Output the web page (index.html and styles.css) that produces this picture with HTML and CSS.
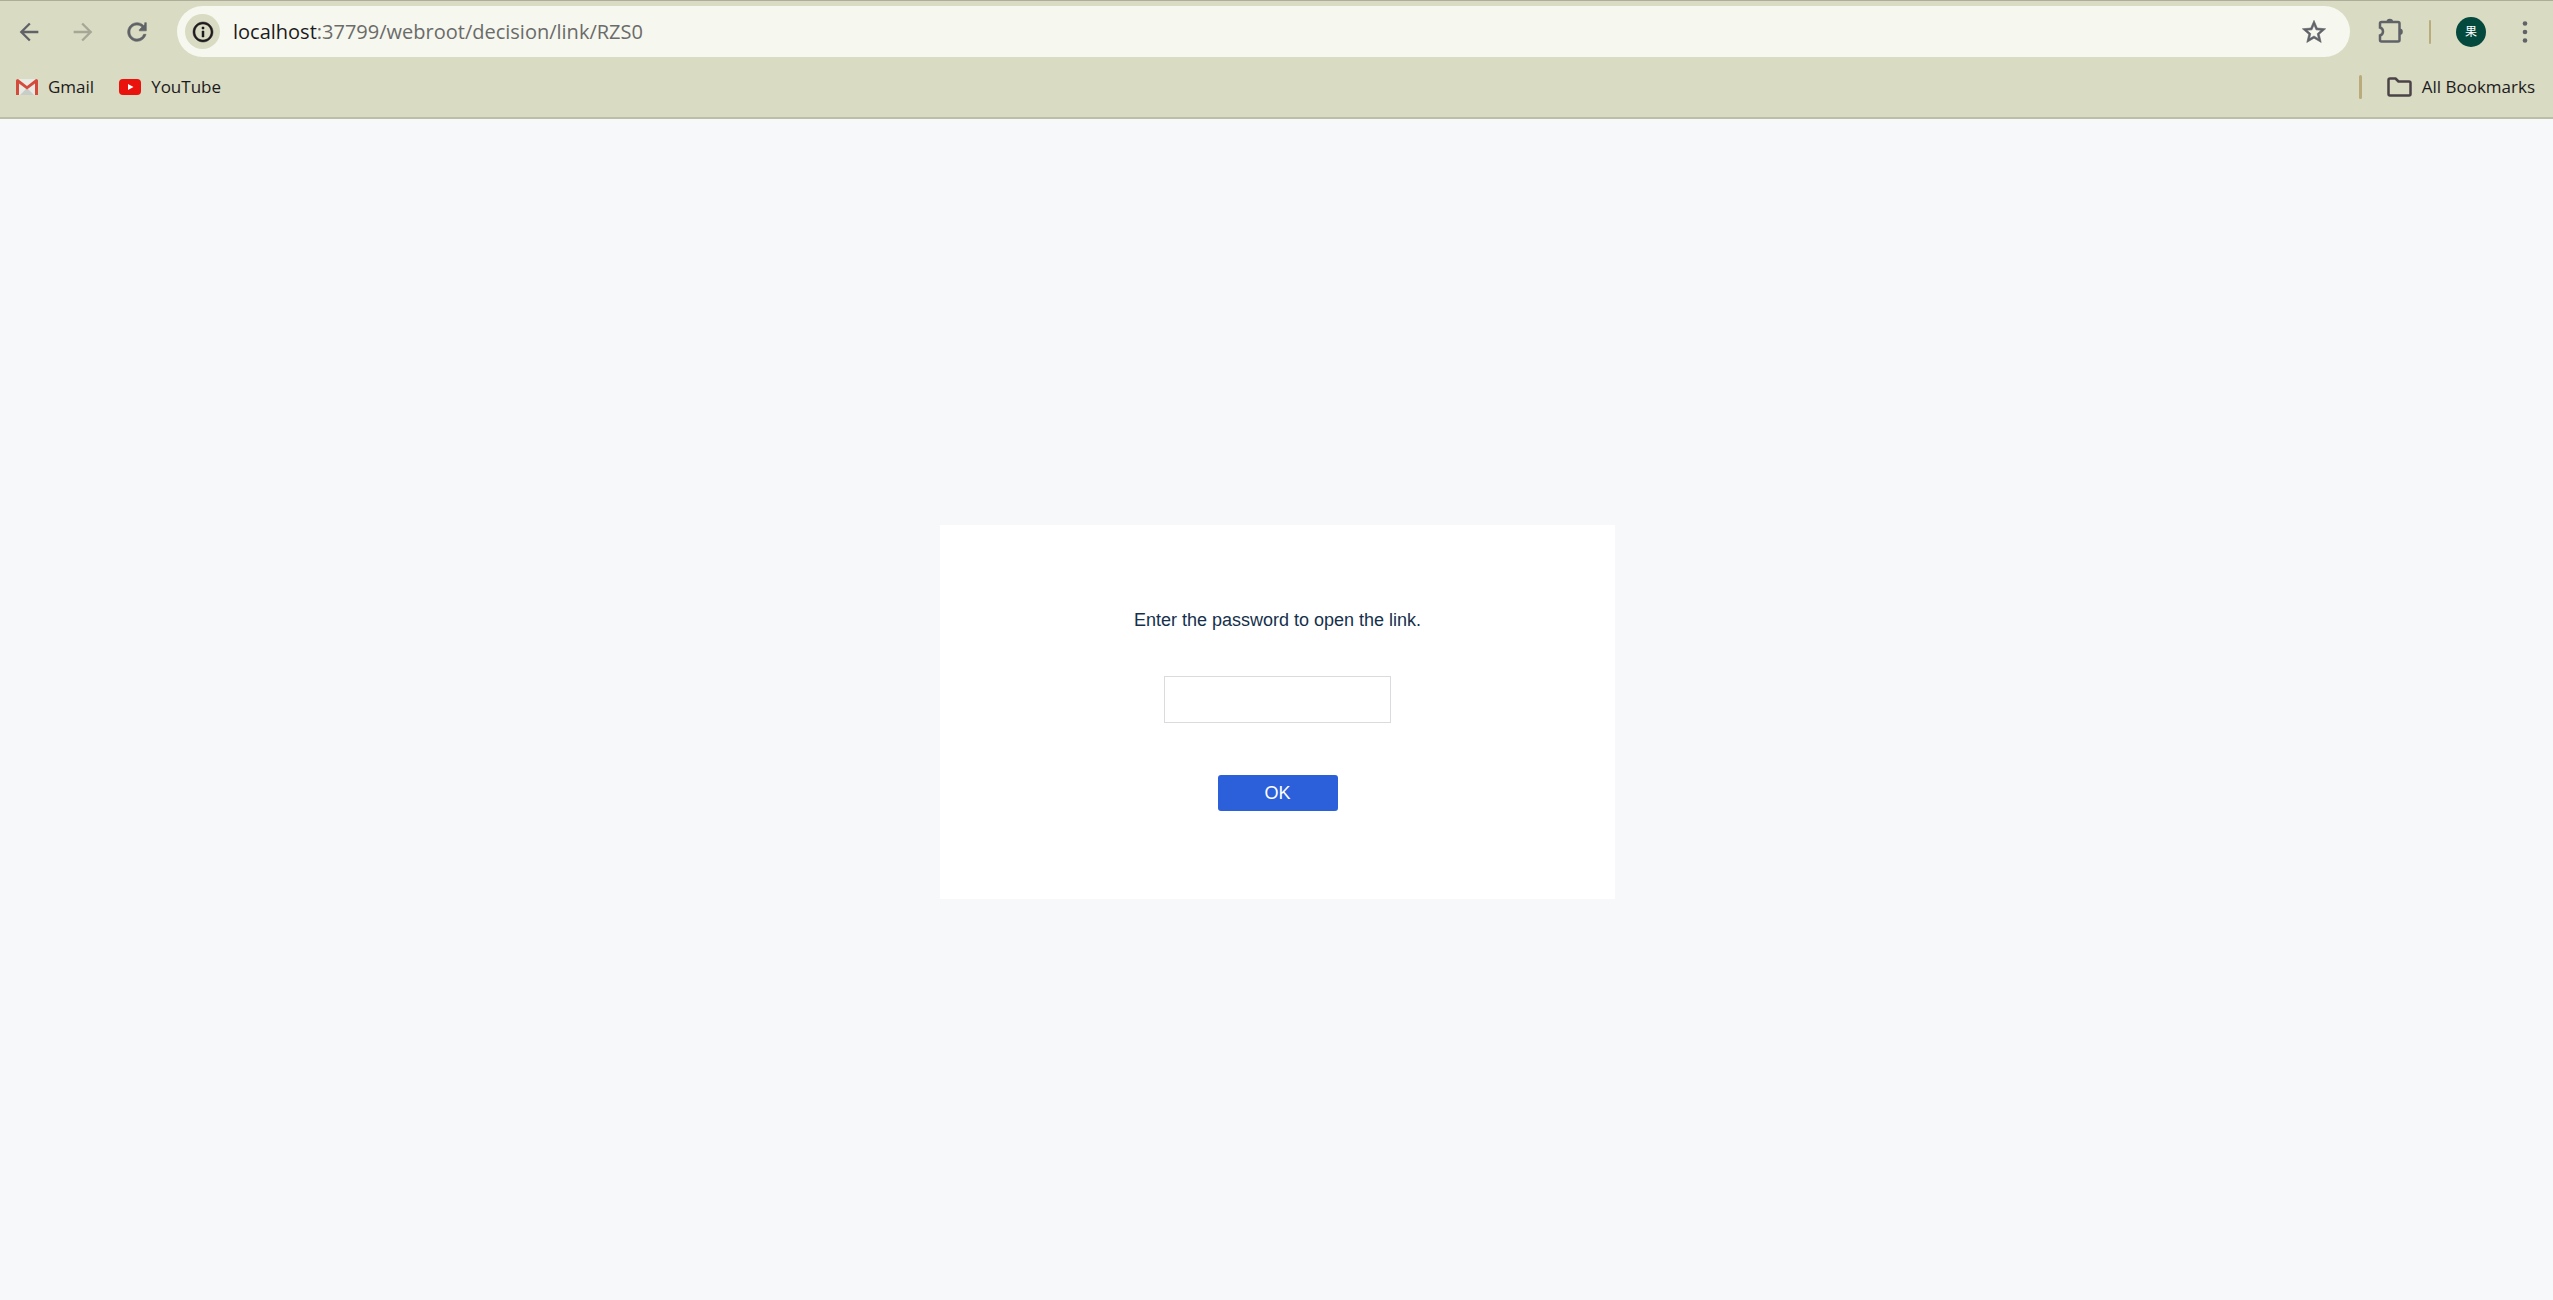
FILE: index.html
```
<!DOCTYPE html>
<html lang="en">
<head>
  <meta charset="utf-8">
  <title>Password</title>
  <link rel="stylesheet" href="styles.css">
</head>
<body>
  <header class="browser">
    <div class="toolbar">
      <button class="tool" type="button" aria-label="Back">
        <svg width="28" height="28" viewBox="0 0 24 24"><path d="M20 11H7.83l5.59-5.59L12 4l-8 8 8 8 1.41-1.41L7.83 13H20v-2z"/></svg>
      </button>
      <button class="tool disabled" type="button" aria-label="Forward">
        <svg width="28" height="28" viewBox="0 0 24 24"><path d="M4 11h12.17l-5.59-5.59L12 4l8 8-8 8-1.41-1.41L16.17 13H4v-2z"/></svg>
      </button>
      <button class="tool bold" type="button" aria-label="Reload">
        <svg width="28" height="28" viewBox="0 0 24 24"><path d="M17.65 6.35C16.2 4.9 14.21 4 12 4c-4.42 0-7.99 3.58-7.99 8s3.57 8 7.99 8c3.73 0 6.84-2.55 7.73-6h-2.08c-.82 2.33-3.04 4-5.65 4-3.31 0-6-2.69-6-6s2.69-6 6-6c1.66 0 3.14.69 4.22 1.78L14 10v1h6V4h-1.4v1.4z"/></svg>
      </button>
      <div class="omnibox">
        <button class="site-info" type="button" aria-label="Site information">
          <svg width="24" height="24" viewBox="0 0 24 24"><path d="M11 7h2v2h-2zM11 11h2v6h-2zM12 2C6.48 2 2 6.48 2 12s4.48 10 10 10 10-4.48 10-10S17.52 2 12 2zm0 18c-4.41 0-8-3.59-8-8s3.59-8 8-8 8 3.59 8 8-3.59 8-8 8z"/></svg>
        </button>
        <div class="url"><span class="host">localhost</span>:37799/webroot/decision/link/RZS0</div>
        <button class="tool bold" type="button" aria-label="Bookmark this tab">
          <svg width="28" height="28" viewBox="0 0 24 24"><path d="M22 9.24l-7.19-.62L12 2 9.19 8.63 2 9.24l5.46 4.73L5.82 21 12 17.27 18.18 21l-1.63-7.03L22 9.24zM12 15.4l-3.76 2.27 1-4.28-3.32-2.88 4.38-.38L12 6.1l1.71 4.04 4.38.38-3.32 2.88 1 4.28L12 15.4z"/></svg>
        </button>
      </div>
      <div class="tools">
        <button class="tool" type="button" aria-label="Extensions">
          <svg width="28" height="28" viewBox="0 0 28 28"><path class="line" d="M4 5.500q0-1.500 1.500-1.500h16.500q1.500 0 1.500 1.500v16.500q0 1.500-1.500 1.500h-16.500q-1.500 0-1.500-1.500v-4.500q3-1 3-4t-3-4z"/><path d="M10.500 4a3.300 3.300 0 0 1 6.600 0zM23.500 10.500a3.300 3.300 0 0 1 0 6.600z"/></svg>
        </button>
        <span class="divider thin"></span>
        <button class="avatar" type="button">果</button>
        <button class="tool" type="button" aria-label="Menu">
          <svg width="28" height="28" viewBox="0 0 28 28"><circle cx="14" cy="5.500" r="2.300"/><circle cx="14" cy="14" r="2.300"/><circle cx="14" cy="22.500" r="2.300"/></svg>
        </button>
      </div>
    </div>
    <nav class="bookmarks">
      <a class="bookmark" href="#">
        <svg width="22" height="16" viewBox="0 0 22 16"><path fill="#e8eae4" d="M2 0h18v16H2z"/><path fill="#c9cdc8" d="M4 16l7-7 7 7z"/><path fill="#d54b3b" d="M0 1.500Q0 0 2 0l9 7 9-7q2 0 2 1.500V16h-3V4.500l-8 6-8-6V16H0z"/></svg>
        Gmail
      </a>
      <a class="bookmark" href="#">
        <svg width="22" height="16" viewBox="0 0 22 16"><rect fill="#e9120d" width="22" height="16" rx="4"/><path fill="#fff" d="M9 5l5.500 3L9 11z"/></svg>
        YouTube
      </a>
      <span class="divider last"></span>
      <a class="bookmark" href="#">
        <svg width="25" height="20" viewBox="0 0 25 20"><path fill="none" stroke="#4b4348" stroke-width="2.500" stroke-linejoin="round" d="M1.500 3q0-1.500 1.500-1.500h5.500l3 3H22q1.500 0 1.500 1.500v11q0 1.500-1.500 1.500H3q-1.500 0-1.500-1.500z"/></svg>
        All Bookmarks
      </a>
    </nav>
  </header>
  <main class="page">
    <form class="card">
      <label class="message" for="password">Enter the password to open the link.</label>
      <input class="password" id="password" type="password">
      <button class="ok" type="button">OK</button>
    </form>
  </main>
</body>
</html>
```
FILE: styles.css
```
* {
  box-sizing: border-box;
}
body {
  margin: 0;
  min-height: 100vh;
  display: flex;
  flex-direction: column;
  background: #f7f8fa;
  font-family: "Liberation Sans", Arial, sans-serif;
  font-size: 18px;
}
button {
  border: 0;
  padding: 0;
  background: none;
  font-family: inherit;
}
svg {
  display: block;
}

/* browser bars */
.browser {
  background: #d9dbc3;
  border-top: 1px solid #adad99;
  border-bottom: 2px solid #bcbea7;
  font-family: "Open Sans", "Noto Sans CJK SC", sans-serif;
}
.toolbar {
  display: flex;
  align-items: center;
  gap: 26px;
  padding: 5px 14px 0 15px;
}
.tool {
  width: 28px;
  height: 28px;
  fill: #5f6368;
}
.tool.disabled {
  fill: #a6a797;
}
.tool.bold {
  stroke: #5f6368;
  stroke-width: 0.5;
}
.tool .line {
  fill: none;
  stroke: #5f6368;
  stroke-width: 2.5;
}
.omnibox {
  flex: 1;
  display: flex;
  align-items: center;
  height: 51px;
  padding: 0 22px 0 8px;
  border-radius: 26px;
  background: #f6f7ee;
}
.site-info {
  display: flex;
  align-items: center;
  justify-content: center;
  width: 35px;
  height: 35px;
  border-radius: 50%;
  background: #d9dbc3;
  fill: #1f1a1e;
  stroke: #1f1a1e;
  stroke-width: 0.5;
}
.url {
  flex: 1;
  margin-left: 13px;
  font-size: 20px;
  color: #6a6b6a;
}
.host {
  color: #1c1a20;
}
.tools {
  display: flex;
  align-items: center;
  gap: 25px;
}
.divider {
  width: 3px;
  height: 24px;
  border-radius: 2px;
  background: #b9ab7c;
}
.divider.thin {
  width: 2px;
}
.avatar {
  width: 30px;
  height: 30px;
  border-radius: 50%;
  background: #04493d;
  color: #fff;
  font-size: 12px;
  line-height: 30px;
}
.bookmarks {
  display: flex;
  align-items: center;
  gap: 25px;
  height: 60px;
  padding: 0 18px 0 16px;
}
.bookmark {
  display: flex;
  align-items: center;
  gap: 10px;
  font-size: 17px;
  line-height: 24px;
  color: #1c1a20;
  text-decoration: none;
}
.bookmarks .last {
  margin-left: auto;
}

/* password form */
.page {
  flex: 1;
  display: flex;
  align-items: center;
  justify-content: center;
  padding: 5px 0 0 2px;
}
.card {
  display: flex;
  flex-direction: column;
  align-items: center;
  width: 675px;
  padding: 84px 20px 88px;
  background: #fff;
}
.message {
  line-height: 22px;
  color: #16304c;
}
.password {
  width: 227px;
  height: 47px;
  margin: 45px 0 52px;
  padding: 0 10px;
  border: 1px solid #d9dbdf;
  background: #fff;
  font-size: 18px;
}
.ok {
  width: 120px;
  height: 36px;
  border-radius: 3px;
  background: #2c60db;
  color: #fff;
  font-size: 18px;
}
```
